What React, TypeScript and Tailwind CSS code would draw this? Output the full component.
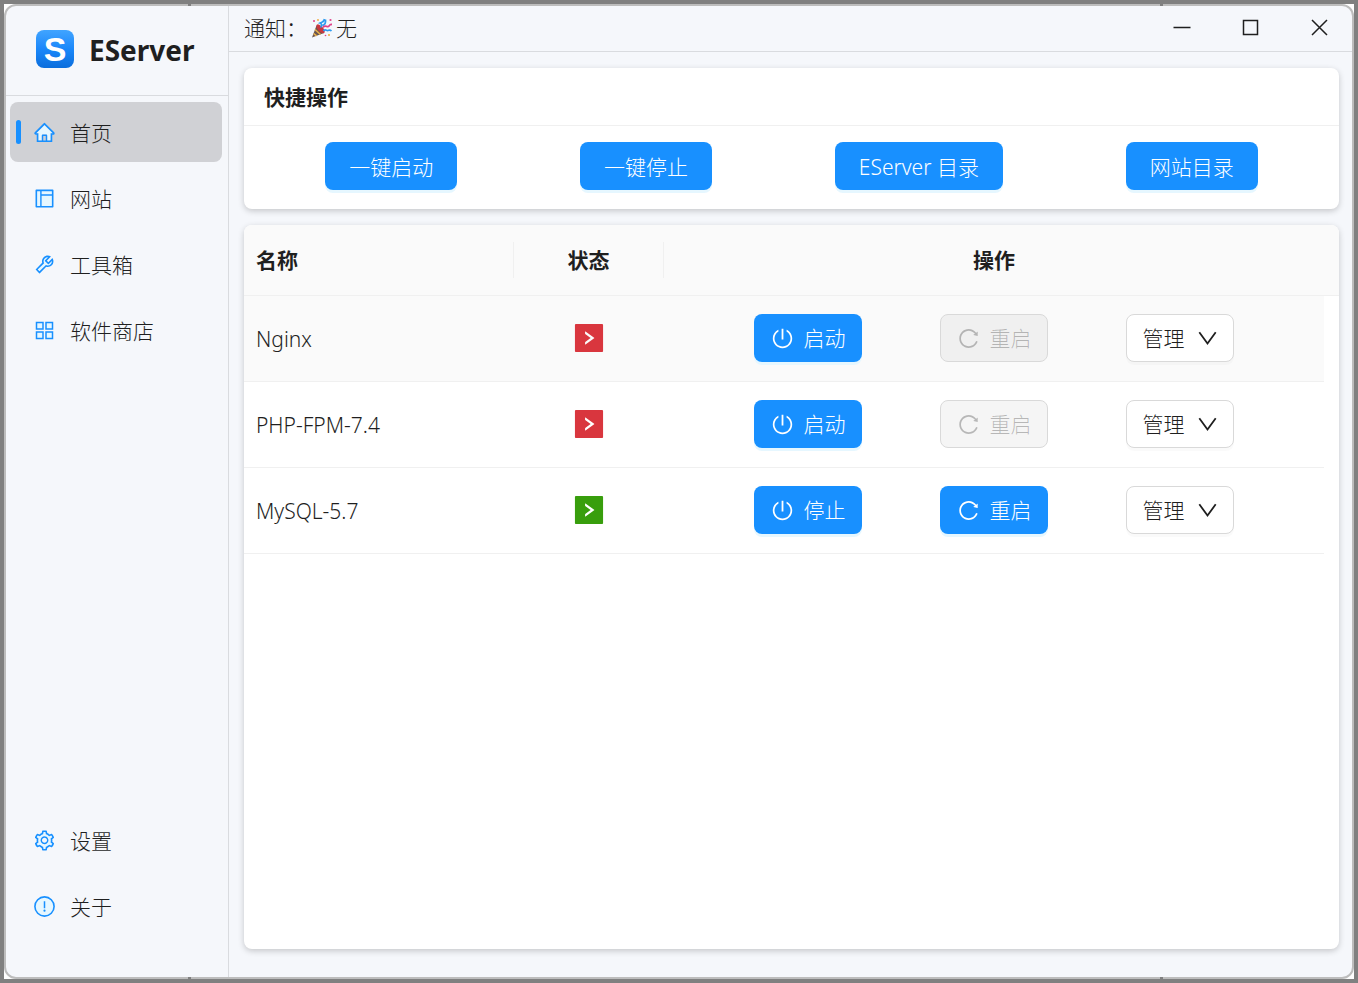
import type { ReactNode } from 'react'
import {
    AiFillRightSquare,
    AiOutlinePoweroff,
    AiOutlineReload,
    AiTwotoneHome,
    AiTwotoneLayout,
    AiTwotoneSetting,
    AiTwotoneTool,
} from 'react-icons/ai'

type IconProps = { className?: string }
type MenuItem = { label: string; icon: (props: IconProps) => ReactNode; active?: boolean }

function AppstoreIcon({ className }: IconProps) {
    return <svg viewBox="0 0 23 23" className={className} fill="#e6f7ff" stroke="currentColor" strokeWidth="1.5" aria-hidden="true">
        <rect x="3.5" y="3.5" width="6.5" height="6.5" />
        <rect x="13" y="3.5" width="6.5" height="6.5" />
        <rect x="3.5" y="13" width="6.5" height="6.5" />
        <rect x="13" y="13" width="6.5" height="6.5" />
    </svg>
}

function AboutIcon({ className }: IconProps) {
    return <svg viewBox="0 0 23 23" className={className} aria-hidden="true">
        <circle cx="11.5" cy="11.5" r="9.6" fill="#e6f7ff" stroke="currentColor" strokeWidth="1.6" />
        <path d="M11.5 6.3v6.9" stroke="currentColor" strokeWidth="1.5" />
        <circle cx="11.5" cy="15.7" r="1.1" fill="currentColor" />
    </svg>
}

const mainMenu: MenuItem[] = [
    { label: '首页', icon: AiTwotoneHome, active: true },
    { label: '网站', icon: AiTwotoneLayout },
    { label: '工具箱', icon: AiTwotoneTool },
    { label: '软件商店', icon: AppstoreIcon },
]

const footMenu: MenuItem[] = [
    { label: '设置', icon: AiTwotoneSetting },
    { label: '关于', icon: AboutIcon },
]

const windowControls = [
    { label: '最小化', path: 'M4.5 12.5h17' },
    { label: '最大化', path: 'M5.5 5.5h14v14h-14z' },
    { label: '关闭', path: 'M5 5l15 15M20 5L5 20' },
]

const services = [
    { name: 'Nginx', running: false, hover: true },
    { name: 'PHP-FPM-7.4', running: false, hover: false },
    { name: 'MySQL-5.7', running: true, hover: false },
]

const quickActions = ['一键启动', '一键停止', 'EServer 目录', '网站目录']

function Menu({ items }: { items: MenuItem[] }) {
    return <ul className="flex flex-col gap-1.5 pl-1 pr-1.5">
        {items.map(({ label, icon: Icon, active }) => (
            <li key={label}>
                <a href="#" aria-current={active ? 'page' : undefined}
                    className={`flex h-[60px] items-center rounded-lg pl-1.5 ${active ? 'bg-[#d0d1d5]' : ''}`}>
                    <span className={`h-6 w-[5px] rounded-sm ${active ? 'bg-[#1890ff]' : ''}`} />
                    <Icon className="ml-3 size-[23px] text-[#1890ff] [&_path[fill]]:fill-[#e6f7ff]" />
                    <span className="ml-3.5 pt-0.5">{label}</span>
                </a>
            </li>
        ))}
    </ul>
}

function Button({ children, disabled, className = '' }: { children: ReactNode; disabled?: boolean; className?: string }) {
    const look = disabled
        ? 'border border-[#d9d9d9] bg-black/4 text-black/25'
        : 'bg-[#1890ff] text-white shadow-[0_3px_0_#e6f7ff]'
    return <button type="button" disabled={disabled}
        className={`flex h-12 items-center justify-center rounded-lg whitespace-nowrap ${look} ${className}`}>
        {children}
    </button>
}

function PartyPopper() {
    return <svg viewBox="0 0 22 22" className="ml-1 size-[22px]" aria-hidden="true">
        <path d="M5.5 8.5 1 20.5l12-4.5z" fill="#6b5650" />
        <path d="M4 12.5l5.5 5M2.6 16.5l3 2.4" stroke="#e8b04a" strokeWidth="1.6" />
        <ellipse cx="9.5" cy="11.8" rx="2.6" ry="5.6" transform="rotate(-42 9.5 11.8)" fill="#c8373f" />
        <path d="M9.5 10.5c2-2 1-4-.5-4.5 3-1.5 4-1 4.5-4M11.5 8.5c2-.5 3.5-2 3-6" fill="none" stroke="#2f9cf0" strokeWidth="1.7" />
        <path d="M12 10.5c2-3.5 4.5.5 6-1.500s1.500-1.500 3-1.500" fill="none" stroke="#e0428a" strokeWidth="1.8" />
        <path d="M12.5 14c2-2.5 3 0 4.5-.5s2-1 3.500.5" fill="none" stroke="#2f9cf0" strokeWidth="1.7" />
        <circle cx="3" cy="4" r="1" fill="#e0428a" />
        <circle cx="7" cy="3" r="0.9" fill="#f0a93c" />
        <circle cx="19.5" cy="3" r="1.1" fill="#e0428a" />
        <circle cx="18" cy="18" r="1" fill="#f0a93c" />
        <circle cx="14.5" cy="18.5" r="0.8" fill="#e0428a" />
    </svg>
}

function Sidebar() {
    return <aside className="flex w-[223px] shrink-0 flex-col border-r border-[#d9dbdf]">
        <div className="flex h-[90px] items-center gap-[15px] border-b border-[#d9dbdf] pb-1 pl-[30px]">
            <span className="flex size-[38px] items-center justify-center rounded-lg bg-linear-to-b from-[#40a4ff] via-[#1a88fa] to-[#0a6ddc] font-['Liberation_Sans'] text-[34px] leading-none font-bold text-white">
                S
            </span>
            <h1 className="pt-0.5 text-[28px] font-bold">EServer</h1>
        </div>
        <nav className="flex grow flex-col justify-between pt-1.5 pb-[41px]">
            <Menu items={mainMenu} />
            <Menu items={footMenu} />
        </nav>
    </aside>
}

function TitleBar() {
    return <header className="flex h-[46px] shrink-0 items-center justify-between border-b border-[#d9dbdf] pr-5 pl-[15px]">
        <div className="flex items-center pb-0.5">
            <span>通知：</span>
            <PartyPopper />
            <span className="ml-[3px]">无</span>
        </div>
        <div className="flex gap-11 pb-0.5">
            {windowControls.map(({ label, path }) => (
                <button key={label} type="button" aria-label={label}>
                    <svg viewBox="0 0 25 25" className="size-[25px]" fill="none" stroke="currentColor" strokeWidth="1.5">
                        <path d={path} />
                    </svg>
                </button>
            ))}
        </div>
    </header>
}

function QuickPanel() {
    return <section className="rounded-lg bg-white shadow-[0_2px_6px_rgba(0,0,0,0.2)]">
        <h2 className="flex h-[58px] items-center border-b border-[#f0f0f0] pl-5 font-bold">快捷操作</h2>
        <div className="flex justify-around px-5 pt-4 pb-[19px]">
            {quickActions.map(label => <Button key={label} className="px-6 pt-0.5">{label}</Button>)}
        </div>
    </section>
}

function ServiceTable() {
    return <section className="grow overflow-hidden rounded-lg bg-white shadow-[0_2px_6px_rgba(0,0,0,0.2)]">
        <table className="w-full table-fixed">
            <colgroup>
                <col className="w-[270px]" />
                <col className="w-[150px]" />
                <col />
                <col className="w-[15px]" />
            </colgroup>
            <thead className="bg-[#fafafa]">
                <tr className="h-[70px] border-b border-[#f0f0f0]">
                    <th scope="col" className="p-0 text-left font-bold">
                        <div className="flex h-9 items-center border-r border-[#f0f0f0] pl-3">名称</div>
                    </th>
                    <th scope="col" className="p-0 font-bold">
                        <div className="flex h-9 items-center justify-center border-r border-[#f0f0f0]">状态</div>
                    </th>
                    <th scope="col" className="p-0 font-bold">操作</th>
                    <td />
                </tr>
            </thead>
            <tbody>
                {services.map(({ name, running, hover }) => (
                    <tr key={name} className="h-[86px] [&>td:not(:last-child)]:border-b [&>td]:border-[#f0f0f0]">
                        <td className={`pt-0.5 pl-3 ${hover ? 'bg-[#fafafa]' : ''}`}>{name}</td>
                        <td className={hover ? 'bg-[#fafafa]' : ''}>
                            <AiFillRightSquare role="img" aria-label={running ? '运行中' : '已停止'}
                                className={`mx-auto size-9 ${running ? 'text-[#389e0d]' : 'text-[#d9363e]'}`} />
                        </td>
                        <td className={hover ? 'bg-[#fafafa]' : ''}>
                            <div className="flex justify-evenly px-3">
                                <Button className="w-[108px] gap-2.5">
                                    <AiOutlinePoweroff className="size-[23px]" />
                                    {running ? '停止' : '启动'}
                                </Button>
                                <Button className="w-[108px] gap-2.5" disabled={!running}>
                                    <AiOutlineReload className="size-[23px]" />
                                    重启
                                </Button>
                                <button type="button" aria-haspopup="menu"
                                    className="flex h-12 w-[108px] items-center justify-center gap-3 rounded-lg border border-[#d9d9d9] bg-white shadow-[0_3px_0_rgba(0,0,0,0.02)]">
                                    管理
                                    <svg viewBox="0 0 21 21" className="size-[21px]" fill="none" stroke="currentColor" strokeWidth="1.8" aria-hidden="true">
                                        <path d="M2.3 4.3l8.2 11.2 8.2-11.2" />
                                    </svg>
                                </button>
                            </div>
                        </td>
                        <td />
                    </tr>
                ))}
            </tbody>
        </table>
    </section>
}

// small dark notches on the top and bottom window edge
function EdgeMarks() {
    return <>
        <span className="absolute top-0 left-[13.6%] h-0.5 w-[3px] bg-[#808080]" />
        <span className="absolute top-0 left-[85.6%] h-0.5 w-[3px] bg-[#808080]" />
        <span className="absolute bottom-0 left-[13.6%] h-0.5 w-[3px] bg-[#808080]" />
        <span className="absolute bottom-0 left-[85.6%] h-0.5 w-[3px] bg-[#808080]" />
    </>
}

export default function App() {
    return <div className="relative h-screen min-h-[640px] border-4 border-[#808080] bg-white font-['Noto_Sans','Noto_Sans_CJK_SC',sans-serif] text-[21px] leading-8 font-light text-[#1f1f1f]">
        <div className="flex h-full overflow-hidden rounded-xl border-2 border-[#bdbdbd] bg-[#f5f7fb]">
            <Sidebar />
            <div className="flex min-w-0 grow flex-col">
                <TitleBar />
                <main className="flex grow flex-col gap-4 pt-4 pr-[13px] pb-7 pl-[15px]">
                    <QuickPanel />
                    <ServiceTable />
                </main>
            </div>
        </div>
        <EdgeMarks />
    </div>
}
